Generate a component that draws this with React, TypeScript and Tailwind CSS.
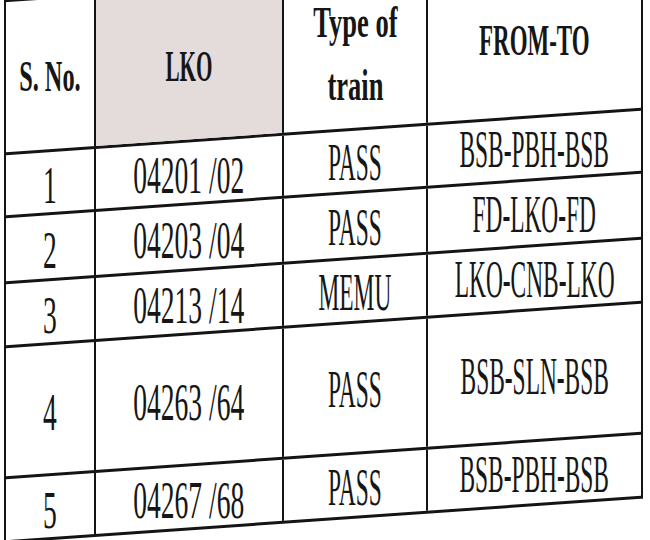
import React from "react";

type Row = { no: string; lko: string; type: string; route: string; h: string };

const rows: Row[] = [
  { no: "1", lko: "04201 /02", type: "PASS", route: "BSB-PBH-BSB", h: "h-[63px]" },
  { no: "2", lko: "04203 /04", type: "PASS", route: "FD-LKO-FD", h: "h-[66px]" },
  { no: "3", lko: "04213 /14", type: "MEMU", route: "LKO-CNB-LKO", h: "h-[64px]" },
  { no: "4", lko: "04263 /64", type: "PASS", route: "BSB-SLN-BSB", h: "h-[131px]" },
  { no: "5", lko: "04267 /68", type: "PASS", route: "BSB-PBH-BSB", h: "h-[64px]" },
];

// text is counter-skewed so it stays level while the ruled lines slope
const digits = "inline-block whitespace-nowrap [transform:skewY(4deg)_scaleX(0.53)]";
const letters = "inline-block whitespace-nowrap [transform:skewY(4deg)_scaleX(0.45)]";

export default function App() {
  return (
    <div className="w-[650px] h-[540px] overflow-hidden bg-white font-['Liberation_Serif',serif] text-[#161616]">
      <div className="ml-[4px] mt-[-23px] w-[639px] border-x-2 border-t-[3px] border-[#141414] [transform:skewY(-4deg)]">
        {/* header */}
        <div className="grid h-[153px] grid-cols-[90px_188px_144px_213px] border-b-[3px] border-[#141414] text-[45px] font-bold">
          <div className="flex min-w-0 items-center justify-center border-r-2 border-[#141414] pt-1">
            <span className="inline-block whitespace-nowrap leading-none [transform:skewY(4deg)_scaleX(0.54)]">S. No.</span>
          </div>
          <div className="flex min-w-0 items-center justify-center border-r-2 border-[#141414] bg-[#e4dcdb] pt-1">
            <span className="inline-block whitespace-nowrap leading-none [transform:skewY(4deg)_scaleX(0.47)]">LKO</span>
          </div>
          <div className="flex min-w-0 items-center justify-center border-r-2 border-[#141414] pt-[2px]">
            <div className="flex flex-col items-center gap-[18px] whitespace-nowrap leading-none [transform:skewY(4deg)_scaleX(0.59)]">
              <span>Type of</span>
              <span>train</span>
            </div>
          </div>
          <div className="flex min-w-0 items-center justify-center">
            <span className="inline-block whitespace-nowrap leading-none [transform:skewY(4deg)_scaleX(0.51)]">FROM-TO</span>
          </div>
        </div>

        {rows.map((r) => (
          <div
            key={r.no}
            className={`grid ${r.h} grid-cols-[90px_188px_144px_213px] border-b-[3px] border-[#141414] text-[52px] leading-none`}
          >
            <div className="flex min-w-0 items-center justify-center border-r-2 border-[#141414] pt-2">
              <span className={digits}>{r.no}</span>
            </div>
            <div className="flex min-w-0 items-center justify-center border-r-2 border-[#141414] pt-2">
              <span className={digits}>{r.lko}</span>
            </div>
            <div className="flex min-w-0 items-center justify-center border-r-2 border-[#141414] pt-1">
              <span className={letters}>{r.type}</span>
            </div>
            <div className="flex min-w-0 items-center justify-center pt-1">
              <span className={letters}>{r.route}</span>
            </div>
          </div>
        ))}
      </div>
    </div>
  );
}
